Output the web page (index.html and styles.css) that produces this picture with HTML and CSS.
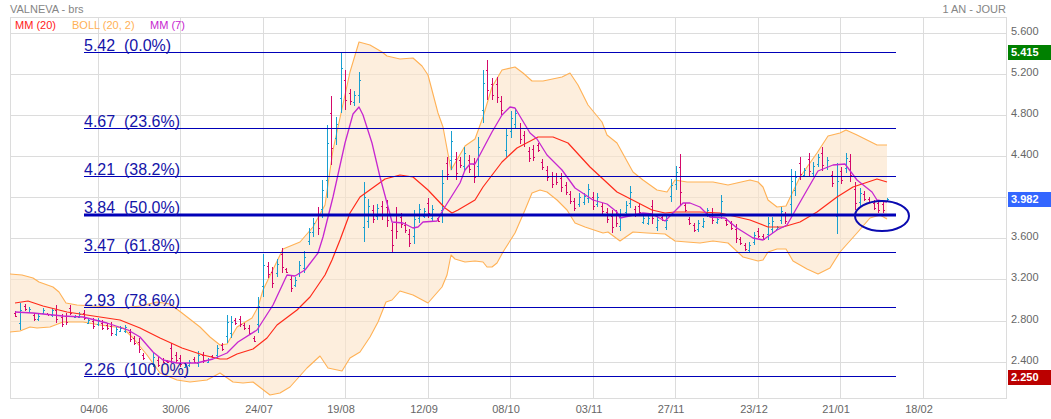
FILE: index.html
```html
<!DOCTYPE html>
<html lang="fr">
<head>
<meta charset="utf-8">
<title>VALNEVA - brs</title>
<link rel="stylesheet" href="styles.css">
</head>
<body>
<svg class="chart" width="1051" height="419" viewBox="0 0 1051 419" xmlns="http://www.w3.org/2000/svg">
  <path class="grid" d="M10 17.5H1006M10 33.5H1006M10 74.5H1006M10 115.5H1006M10 156.5H1006M10 197.5H1006M10 238.5H1006M10 279.5H1006M10 321.5H1006M10 362.5H1006M10 398.5H1006M10.5 17V399M98.5 17V399M180.5 17V399M263.5 17V399M345.5 17V399M428.5 17V399M510.5 17V399M593.5 17V399M675.5 17V399M758.5 17V399M840.5 17V399M923.5 17V399M1006.5 17V399"/>
  <polygon class="band" points="10,274 22,275 33,278 39,282 53,287 59,292 66,303 77,305 93,306 123,308 140,306 157,302 170,304 182,313 200,327 210,337 220,345 227,344 237,327 252,318 258,307 263,290 283,249 300,242 313,227 325,205 333,150 350,72 359,42 370,45 382,52 387,56 400,59 413,58 422,66 428,75 438,113 443,127 451,170 465,146 475,139 483,117 492,87 502,70 515,67 523,73 532,81 543,81 562,77 570,73 578,85 588,105 602,122 607,135 617,143 633,172 643,180 657,190 667,192 675,180 687,182 713,182 728,185 750,180 758,182 763,187 768,200 777,207 786,206 800,177 817,153 828,136 840,133 846,130 857,135 865,139 877,145 887,145 887,219 880,215 870,218 857,233 840,252 830,268 818,274 807,269 793,261 786,249 777,249 768,252 763,260 758,261 743,257 728,243 713,241 700,243 687,242 675,241 665,234 647,233 633,232 620,241 608,232 603,233 585,227 575,223 567,210 557,200 547,192 540,190 532,193 525,210 515,233 503,252 497,263 492,267 487,267 483,262 475,261 465,262 455,259 451,255 447,275 442,287 428,303 413,295 400,291 392,300 386,302 378,322 370,337 360,352 350,358 342,371 328,368 320,356 307,368 290,387 280,393 270,395 253,382 243,383 233,382 220,373 207,380 190,382 177,380 160,373 147,355 133,338 123,328 100,325 83,322 63,322 50,327 37,328 30,327 20,331 10,332"/>
  <polyline class="boll" points="10,274 22,275 33,278 39,282 53,287 59,292 66,303 77,305 93,306 123,308 140,306 157,302 170,304 182,313 200,327 210,337 220,345 227,344 237,327 252,318 258,307 263,290 283,249 300,242 313,227 325,205 333,150 350,72 359,42 370,45 382,52 387,56 400,59 413,58 422,66 428,75 438,113 443,127 451,170 465,146 475,139 483,117 492,87 502,70 515,67 523,73 532,81 543,81 562,77 570,73 578,85 588,105 602,122 607,135 617,143 633,172 643,180 657,190 667,192 675,180 687,182 713,182 728,185 750,180 758,182 763,187 768,200 777,207 786,206 800,177 817,153 828,136 840,133 846,130 857,135 865,139 877,145 887,145"/>
  <polyline class="boll" points="10,332 20,331 30,327 37,328 50,327 63,322 83,322 100,325 123,328 133,338 147,355 160,373 177,380 190,382 207,380 220,373 233,382 243,383 253,382 270,395 280,393 290,387 307,368 320,356 328,368 342,371 350,358 360,352 370,337 378,322 386,302 392,300 400,291 413,295 428,303 442,287 447,275 451,255 455,259 465,262 475,261 483,262 487,267 492,267 497,263 503,252 515,233 525,210 532,193 540,190 547,192 557,200 567,210 575,223 585,227 603,233 608,232 620,241 633,232 647,233 665,234 675,241 687,242 700,243 713,241 728,243 743,257 758,261 763,260 768,252 777,249 786,249 793,261 807,269 818,274 830,268 840,252 857,233 870,218 880,215 887,219"/>
  <path class="bars-up" id="barsUp"/>
  <path class="bars-down" id="barsDown"/>
  <polyline class="mm20" points="15,303 28,301 43,306 67,312 100,317 120,320 140,328 160,338 182,348 203,355 220,359 227,359 237,354 253,349 267,338 277,325 297,310 310,297 325,275 332,260 340,240 350,213 360,197 385,179 400,175 413,177 428,190 445,208 452,213 458,210 475,200 483,187 502,162 517,148 538,137 553,137 568,143 590,167 617,192 652,210 665,213 675,212 700,212 720,213 750,220 768,227 783,227 800,222 817,212 837,197 853,187 877,179 887,182"/>
  <polyline class="mm7" points="15,312 33,313 43,314 63,316 83,317 107,323 128,330 140,337 153,352 163,360 177,363 197,363 213,359 227,353 238,342 257,330 273,305 287,275 295,276 305,270 318,253 323,237 333,197 345,143 353,114 359,107 363,115 372,143 380,177 387,203 392,222 403,223 413,228 418,227 423,222 437,221 443,210 460,183 465,170 470,164 475,164 492,132 502,115 510,107 515,108 530,133 537,139 547,155 562,170 575,188 593,200 607,204 617,212 620,218 643,213 652,214 665,221 673,213 683,203 690,203 700,207 710,217 725,218 737,228 753,238 763,240 777,230 787,225 803,197 818,171 833,165 845,164 857,180 872,192 877,200 887,202"/>
  <path class="fib" d="M84 52.5H896M84 128.5H896M84 176.5H896M84 252.5H896M84 307.5H896M84 376.5H896"/>
  <path class="fib-main" d="M84 215H896"/>
  <ellipse class="circle" cx="882" cy="216" rx="27" ry="15"/>
  <g class="fib-text">
    <text x="84" y="51">5.42  (0.0%)</text>
    <text x="84" y="127">4.67  (23.6%)</text>
    <text x="84" y="175">4.21  (38.2%)</text>
    <text x="84" y="213">3.84  (50.0%)</text>
    <text x="84" y="251">3.47  (61.8%)</text>
    <text x="84" y="306">2.93  (78.6%)</text>
    <text x="84" y="375">2.26  (100.0%)</text>
  </g>
  <text class="head" x="10" y="13">VALNEVA - brs</text>
  <text class="head end" x="1006" y="13">1 AN - JOUR</text>
  <text class="leg red" x="15" y="29">MM (20)</text>
  <text class="leg orange" x="72" y="29">BOLL (20, 2)</text>
  <text class="leg purple" x="150" y="29">MM (7)</text>
  <g class="axis">
    <text x="1011" y="35">5.600</text>
    <text x="1011" y="76">5.200</text>
    <text x="1011" y="117">4.800</text>
    <text x="1011" y="158">4.400</text>
    <text x="1011" y="240">3.600</text>
    <text x="1011" y="281">3.200</text>
    <text x="1011" y="323">2.800</text>
    <text x="1011" y="364">2.400</text>
  </g>
  <g class="dates">
    <text x="94" y="413">04/06</text>
    <text x="176" y="413">30/06</text>
    <text x="259" y="413">24/07</text>
    <text x="341" y="413">19/08</text>
    <text x="424" y="413">12/09</text>
    <text x="506" y="413">08/10</text>
    <text x="589" y="413">03/11</text>
    <text x="671" y="413">27/11</text>
    <text x="754" y="413">23/12</text>
    <text x="836" y="413">21/01</text>
    <text x="919" y="413">18/02</text>
  </g>
  <rect class="tag-green" x="1008" y="45" width="43" height="15"/>
  <text class="tag" x="1011" y="56">5.415</text>
  <rect class="tag-blue" x="1008" y="192" width="43" height="15"/>
  <text class="tag" x="1011" y="203">3.982</text>
  <rect class="tag-red" x="1008" y="370" width="43" height="15"/>
  <text class="tag" x="1011" y="381">2.250</text>
</svg>
<script src="chart.js"></script>
</body>
</html>
```
FILE: styles.css
```css
html, body { margin: 0; padding: 0; background: #fff; }
.chart { display: block; font-family: "Liberation Sans", Arial, sans-serif; }
.grid { fill: none; stroke: #dcdcdc; stroke-width: 1; }
.band { fill: #fbe3c8; fill-opacity: .62; stroke: none; }
.boll { fill: none; stroke: #ffb155; stroke-width: 1.1; stroke-linejoin: round; }
.mm20 { fill: none; stroke: #ff2a1a; stroke-width: 1.2; stroke-linejoin: round; }
.mm7 { fill: none; stroke: #c626d0; stroke-width: 1.3; stroke-linejoin: round; }
.bars-up, .bars-down { fill: none; stroke-width: 1; }
.bars-up { stroke: #189fd0; }
.bars-down { stroke: #d4096a; }
.fib { fill: none; stroke: #0000b8; stroke-width: 1; }
.fib-main { fill: none; stroke: #0000b8; stroke-width: 3; }
.circle { fill: none; stroke: #0a0ab0; stroke-width: 2; }
.fib-text text { font-size: 16px; fill: #1414a8; white-space: pre; }
.head { font-size: 11px; fill: #858585; }
.end { text-anchor: end; }
.leg { font-size: 11px; }
.red { fill: #ff1a1a; }
.orange { fill: #ffb155; }
.purple { fill: #c626d0; }
.axis text { font-size: 11px; fill: #666; }
.dates text { font-size: 11px; fill: #666; text-anchor: middle; }
.tag { font-size: 11px; font-weight: bold; fill: #fff; }
.tag-green { fill: #008000; }
.tag-blue { fill: #3366ff; }
.tag-red { fill: #bb0000; }
```
FILE: chart.js
```js
// Daily bars: [x, high, low] in chart pixels.
var up = [[20,303,330],[29,307,313],[38,314,321],[43,308,314],[52,308,317],[75,315,318],[79,312,318],[88,318,324],[98,318,326],[116,327,336],[120,326,332],[125,325,333],[153,353,367],[185,363,368],[189,360,367],[198,351,367],[208,358,363],[217,345,358],[227,315,343],[231,316,338],[258,297,333],[263,254,297],[277,259,277],[295,277,287],[299,261,277],[304,251,273],[309,228,245],[313,218,237],[322,180,218],[327,125,198],[336,117,145],[341,53,113],[354,91,106],[359,72,103],[364,182,242],[368,199,228],[377,204,220],[414,210,244],[419,204,223],[424,208,218],[432,205,222],[442,170,223],[451,131,170],[464,147,172],[478,137,176],[483,70,123],[506,128,157],[511,111,138],[515,108,129],[579,193,207],[584,193,205],[588,184,203],[597,193,207],[620,209,231],[626,201,216],[630,186,208],[643,216,224],[648,216,225],[657,216,231],[666,216,230],[671,179,202],[676,166,190],[698,220,232],[703,218,228],[707,208,217],[717,217,224],[721,195,219],[749,242,252],[754,232,245],[768,217,240],[772,217,233],[777,226,230],[781,207,224],[791,169,215],[795,171,196],[804,168,177],[813,162,177],[818,154,167],[827,157,170],[837,163,234],[846,153,173],[860,188,207],[887,198,202]];
var down = [[15,311,317],[25,304,311],[34,313,321],[47,313,315],[56,305,323],[62,314,327],[66,313,325],[70,305,315],[84,310,320],[93,318,329],[102,320,330],[107,323,330],[111,322,336],[130,329,342],[134,336,345],[139,338,353],[143,353,360],[158,357,367],[163,358,363],[167,360,363],[171,343,363],[176,352,363],[180,355,367],[194,357,363],[203,352,363],[212,355,358],[222,343,351],[235,318,325],[240,316,327],[244,323,330],[249,325,335],[254,336,342],[268,262,278],[272,267,288],[282,248,273],[286,268,273],[291,275,292],[318,207,235],[331,96,165],[345,70,110],[350,89,105],[373,205,223],[382,201,220],[387,200,227],[392,223,252],[396,207,239],[401,213,228],[405,222,233],[409,229,247],[428,198,218],[438,217,222],[447,157,180],[456,152,180],[460,157,168],[469,155,173],[474,158,183],[487,60,100],[492,78,100],[497,77,103],[501,96,115],[520,123,144],[524,131,147],[529,147,162],[533,145,161],[538,143,152],[542,159,170],[547,166,181],[552,172,188],[556,173,185],[561,173,192],[566,182,195],[570,191,204],[574,198,211],[593,192,210],[602,203,214],[607,208,223],[612,210,233],[616,210,227],[635,206,217],[639,203,215],[652,200,224],[662,215,221],[680,154,205],[685,203,212],[689,217,225],[694,223,232],[712,208,224],[726,218,226],[731,221,230],[736,224,243],[740,237,245],[745,243,251],[758,228,238],[763,234,240],[785,212,224],[800,157,180],[809,153,177],[822,147,171],[832,171,187],[841,167,184],[850,154,182],[855,182,210],[864,191,201],[869,197,203],[874,200,210],[878,200,213],[883,201,213]];

function barPath(list, rising) {
  return list.map(function (b) {
    var x = b[0] + 0.5, h = b[2] - b[1];
    var upper = Math.round(b[1] + h * 0.25) + 0.5;
    var lower = Math.round(b[2] - h * 0.25) + 0.5;
    var open = rising ? lower : upper;
    var close = rising ? upper : lower;
    return 'M' + x + ' ' + b[1] + 'V' + b[2] +
           'M' + (x - 1.5) + ' ' + open + 'h1' +
           'M' + (x + 0.5) + ' ' + close + 'h1';
  }).join('');
}
document.getElementById('barsUp').setAttribute('d', barPath(up, true));
document.getElementById('barsDown').setAttribute('d', barPath(down, false));
```
